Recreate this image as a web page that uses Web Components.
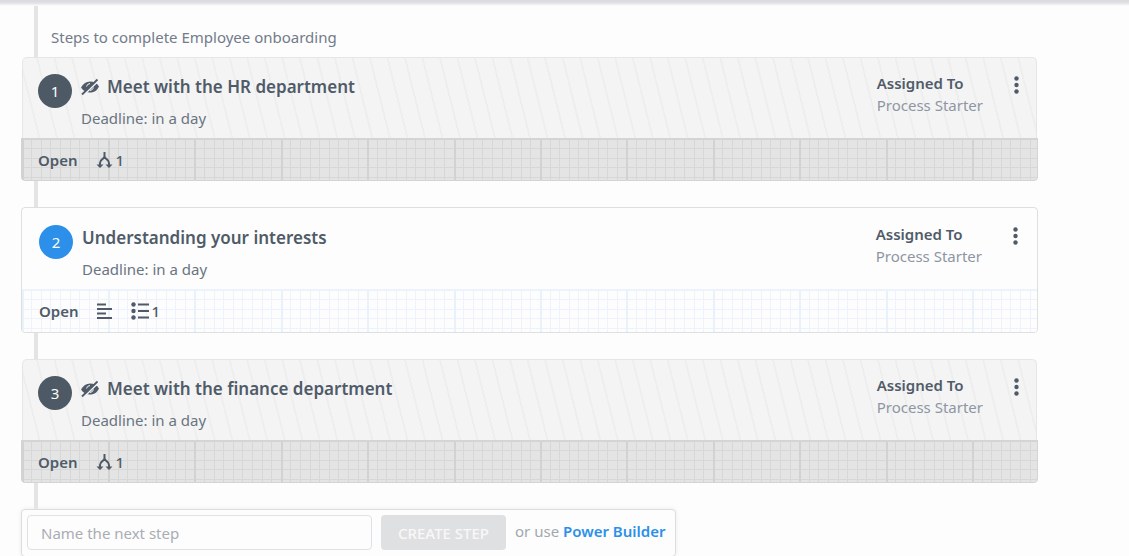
<!DOCTYPE html>
<html lang="en">
<head>
<meta charset="utf-8">
<title>Employee onboarding</title>
<style>
    html {
        scrollbar-width: none;
    }

    body {
        margin: 0;
        background: #fdfdfd;
        color: #505b69;
        font-family: "Noto Sans", "Open Sans", sans-serif;
        font-size: 15px;
        line-height: 22px;
    }
</style>
</head>
<body>

<step-list>
    <span slot="heading">Steps to complete Employee onboarding</span>
    <step-card number="1" muted hidden-step>
        <span slot="title">Meet with the HR department</span>
        <span slot="deadline">Deadline: in a day</span>
        <span slot="assignee">Process Starter</span>
        <step-badge slot="badges" icon="branch">1</step-badge>
    </step-card>
    <step-card number="2">
        <span slot="title">Understanding your interests</span>
        <span slot="deadline">Deadline: in a day</span>
        <span slot="assignee">Process Starter</span>
        <step-badge slot="badges" icon="text"></step-badge>
        <step-badge slot="badges" icon="list">1</step-badge>
    </step-card>
    <step-card number="3" muted hidden-step>
        <span slot="title">Meet with the finance department</span>
        <span slot="deadline">Deadline: in a day</span>
        <span slot="assignee">Process Starter</span>
        <step-badge slot="badges" icon="branch">1</step-badge>
    </step-card>
    <next-step></next-step>
</step-list>

<template id="list-template">
<style>
    :host {
        display: block;
        min-height: 100vh;
    }

    .topbar {
        height: 6px;
        background: linear-gradient(#d9dade, #e2e2e4 3px, #fdfdfd);
    }

    /* the vertical line that joins the steps */
    .track {
        margin-left: 21px;
        margin-right: 91px;
        background: linear-gradient(#e4e4e4, #e4e4e4) 13px 0 / 4px 100% no-repeat;
    }

    h2 {
        margin: 0;
        padding: 20px 0 9px 30px;
        font-size: 15px;
        font-weight: 400;
        color: #727b8a;
    }

    .steps {
        display: flex;
        flex-direction: column;
        gap: 26px;
    }
</style>
<div class="topbar"></div>
<div class="track">
    <h2><slot name="heading"></slot></h2>
    <div class="steps"><slot></slot></div>
</div>
</template>

<template id="card-template">
<style>
    :host {
        display: block;
        box-sizing: border-box;
        border: 1px solid #dedfe1;
        border-radius: 4px;
        background: #fdfdfd;
        overflow: hidden;
        --line: #edf3fc;
        --major: #e9f1fb;
        --strip: #fdfdfd;
        --circle: #2c90ea;
    }

    :host([muted]) {
        border: 0;
        background: none;
        --line: #d6d8d8;
        --major: #d1d3d3;
        --strip: #e4e4e4;
        --circle: #4e5966;
    }

    .head {
        display: flex;
        align-items: flex-start;
        box-sizing: border-box;
        height: 81px;
        padding: 16px 17px 0;
    }

    :host([muted]) .head {
        margin: 0 1px;
        padding: 15px 15px 0;
        border: 1px solid #e6e6e6;
        border-bottom: 0;
        border-radius: 5px 5px 0 0;
        background: repeating-linear-gradient(76deg, #f4f4f4 0 15px, #eeeeee 15px 17px);
    }

    .number {
        flex: none;
        width: 34px;
        height: 34px;
        margin: 1px 9px 0 0;
        border-radius: 50%;
        background: var(--circle);
        color: #fdfdfd;
        line-height: 34px;
        text-align: center;
    }

    .text {
        flex: 1;
        min-width: 0;
        padding-top: 2px;
    }

    h3 {
        display: flex;
        align-items: center;
        gap: 8px;
        margin: 0 0 8px;
        font-size: 17px;
        font-weight: 600;
        line-height: 24px;
    }

    .eye {
        display: none;
        width: 18px;
        height: 18px;
    }

    :host([hidden-step]) .eye {
        display: block;
    }

    .deadline {
        color: #6a7482;
    }

    .assigned {
        flex: none;
        margin: -1px 29px 0 0;
        color: #8e96a3;
        line-height: 22px;
    }

    .assigned b {
        display: block;
        font-weight: 600;
        color: #505b69;
    }

    button {
        flex: none;
        display: block;
        width: 9px;
        height: 24px;
        padding: 0;
        border: 0;
        background: none;
        color: #505b69;
        cursor: pointer;
    }

    .strip {
        display: flex;
        align-items: center;
        gap: 17px;
        box-sizing: border-box;
        height: 43px;
        padding: 0 17px 2px;
        border-top: 2px solid var(--line);
        font-weight: 600;
        background:
            linear-gradient(90deg, var(--major) 2px, transparent 2px 86px, var(--major) 86px 88px, transparent 88px 173px, var(--major) 173px 175px, transparent 175px 259px, var(--major) 259px 261px, transparent 261px 346px, var(--major) 346px 348px, transparent 348px) 86px 0 / 432px 100%,
            linear-gradient(90deg, var(--line) 1px, transparent 1px 10px, var(--line) 10px 11px, transparent 11px 19px, var(--line) 19px 20px, transparent 20px 29px, var(--line) 29px 30px, transparent 30px 38px, var(--line) 38px 39px, transparent 39px) 38px 0 / 48px 100%,
            linear-gradient(transparent 8px, var(--line) 8px 9px, transparent 9px 18px, var(--line) 18px 19px, transparent 19px 27px, var(--line) 27px 28px, transparent 28px 37px, var(--line) 37px 38px, transparent 38px),
            var(--strip);
    }

    :host([muted]) .strip {
        border: 1px solid #d3d4d4;
        border-top-width: 2px;
        border-radius: 0 0 4px 4px;
        padding: 0 16px 1px;
    }
</style>
<div class="head">
    <div class="number"></div>
    <div class="text">
        <h3>
            <svg class="eye" viewBox="0 0 18 18" aria-hidden="true">
                <path d="M0 9.500C2 5.500 5.500 3.500 9 3.500s7 1.500 9 5c-2 4.500-5.500 6-9 6S2 13 0 9.500z" fill="currentColor"/>
                <path d="M5.500 8.500a4 4 0 0 1 3.500-3M12.500 9.500a4 4 0 0 1-3.500 3" fill="none" stroke="#f4f4f4" stroke-width="1"/>
                <path d="M2.300 17.300 17.300 2.800" stroke="#f4f4f4" stroke-width="1.600"/>
                <path d="M1 16.500 16.500 1.500" stroke="currentColor" stroke-width="1.800"/>
            </svg>
            <slot name="title"></slot>
        </h3>
        <div class="deadline"><slot name="deadline"></slot></div>
    </div>
    <div class="assigned"><b>Assigned To</b><slot name="assignee"></slot></div>
    <button type="button" aria-label="Step menu">
        <svg width="9" height="24" viewBox="0 0 9 24" fill="currentColor">
            <circle cx="4.500" cy="5.500" r="2.200"/><circle cx="4.500" cy="12" r="2.200"/><circle cx="4.500" cy="18.500" r="2.200"/>
        </svg>
    </button>
</div>
<div class="strip"><span>Open</span><slot name="badges"></slot></div>
</template>

<template id="badge-template">
<style>
    :host {
        display: flex;
        align-items: center;
        gap: 3px;
        font-weight: 500;
    }

    .icon {
        display: flex;
    }

    svg {
        width: 18px;
        height: 18px;
        fill: none;
        stroke: currentColor;
        stroke-width: 2;
    }
</style>
<span class="icon"></span><slot></slot>
</template>

<template id="next-template">
<style>
    :host {
        align-self: flex-start;
        display: block;
        border: 1px solid #dcdddf;
        border-radius: 4px;
        background: #fdfdfd;
        box-shadow: 0 0 4px #ececec;
    }

    form {
        display: flex;
        align-items: center;
        padding: 5px 10px 6px 5px;
    }

    input {
        box-sizing: border-box;
        width: 345px;
        height: 35px;
        margin: 0 9px 0 0;
        padding: 0 13px;
        border: 1px solid #dfe1e4;
        border-radius: 4px;
        background: #fdfdfd;
        color: #505b69;
        font: inherit;
    }

    input::placeholder {
        color: #a9adb3;
        opacity: 1;
    }

    button {
        height: 35px;
        margin: 0 9px 0 0;
        padding: 0 17px;
        border: 0;
        border-radius: 4px;
        background: #dfe0e2;
        color: #f8f8f8;
        font: inherit;
        font-weight: 500;
    }

    .or {
        padding-bottom: 4px;
        color: #a3a8af;
    }

    a {
        color: #2c90ea;
        font-weight: 600;
        text-decoration: none;
    }
</style>
<form>
    <input type="text" aria-label="Name the next step" placeholder="Name the next step">
    <button type="button">CREATE STEP</button>
    <span class="or">or use <a href="#">Power Builder</a></span>
</form>
</template>

<script>
const icons = {
    branch: `<svg viewBox="0 0 18 18"><path d="M9.500 1v5M9.500 5.500C9 8.500 5 8 5 12v3M9.500 5.500c.5 3 4.500 2.500 4.500 6.500v3"/><path d="M1.500 13.500h7L5 17zM10.500 13.500h7L14 17z" fill="currentColor" stroke="none"/></svg>`,
    text: `<svg viewBox="0 0 18 18"><path d="M1 2.500h9M1 7h15M1 11.500h9M1 16h15"/></svg>`,
    list: `<svg viewBox="0 0 18 18"><path d="M7 2.500h11M7 9h11M7 15.500h11"/><g fill="currentColor" stroke="none"><circle cx="2.500" cy="2.500" r="2.200"/><circle cx="2.500" cy="9" r="2.200"/><circle cx="2.500" cy="15.500" r="2.200"/></g></svg>`
};

class BaseElement extends HTMLElement {
    constructor(templateId) {
        super();
        this.attachShadow({ mode: "open" });
        const template = document.getElementById(templateId);
        this.shadowRoot.appendChild(template.content.cloneNode(true));
    }
}

class StepList extends BaseElement {
    constructor() {
        super("list-template");
    }
}

class StepCard extends BaseElement {
    constructor() {
        super("card-template");
    }

    connectedCallback() {
        this.shadowRoot.querySelector(".number").textContent = this.getAttribute("number");
    }
}

class StepBadge extends BaseElement {
    constructor() {
        super("badge-template");
    }

    connectedCallback() {
        this.shadowRoot.querySelector(".icon").innerHTML = icons[this.getAttribute("icon")];
    }
}

class NextStep extends BaseElement {
    constructor() {
        super("next-template");
    }
}

window.customElements.define("step-list", StepList);
window.customElements.define("step-card", StepCard);
window.customElements.define("step-badge", StepBadge);
window.customElements.define("next-step", NextStep);
</script>
</body>
</html>
